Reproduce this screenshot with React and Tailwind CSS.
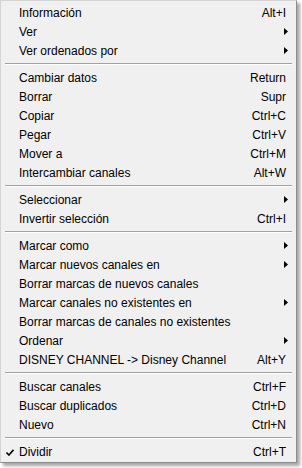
import React from "react";

const groups = [
  [
    { label: "Información", key: "Alt+I" },
    { label: "Ver", sub: true },
    { label: "Ver ordenados por", sub: true },
  ],
  [
    { label: "Cambiar datos", key: "Return" },
    { label: "Borrar", key: "Supr" },
    { label: "Copiar", key: "Ctrl+C" },
    { label: "Pegar", key: "Ctrl+V" },
    { label: "Mover a", key: "Ctrl+M" },
    { label: "Intercambiar canales", key: "Alt+W" },
  ],
  [
    { label: "Seleccionar", sub: true },
    { label: "Invertir selección", key: "Ctrl+I" },
  ],
  [
    { label: "Marcar como", sub: true },
    { label: "Marcar nuevos canales en", sub: true },
    { label: "Borrar marcas de nuevos canales" },
    { label: "Marcar canales no existentes en", sub: true },
    { label: "Borrar marcas de canales no existentes" },
    { label: "Ordenar", sub: true },
    { label: "DISNEY CHANNEL -> Disney Channel", key: "Alt+Y" },
  ],
  [
    { label: "Buscar canales", key: "Ctrl+F" },
    { label: "Buscar duplicados", key: "Ctrl+D" },
    { label: "Nuevo", key: "Ctrl+N" },
  ],
  [{ label: "Dividir", key: "Ctrl+T", checked: true }],
];

const Arrow = () => (
  <svg width="4" height="7" viewBox="0 0 4 7" className="mr-[-2px]">
    <path d="M0 0 L4 3.5 L0 7 Z" fill="#000" />
  </svg>
);

const Check = () => (
  <svg width="8" height="7" viewBox="0 0 8 7" className="absolute left-[5px] top-[7px]">
    <path d="M0.5 3.5 L3 6 L7.5 0.8" stroke="#000" strokeWidth="1.6" fill="none" />
  </svg>
);

const Item = ({ item }) => (
  <div className="relative flex h-[19px] items-center justify-between pl-[18px] pr-[10px]">
    {item.checked && <Check />}
    <span>{item.label}</span>
    {item.key && <span>{item.key}</span>}
    {item.sub && <Arrow />}
  </div>
);

export default function App() {
  return (
    <div className="h-[468px] w-[302px] bg-white">
      <div
        className="w-[297px] border border-t-[#d4d4d4] border-l-[#d4d4d4] border-r-[#8c8c8c] border-b-[#8c8c8c] bg-[#f0f0f0] pt-[2px] pb-[1px] text-[12px] text-black shadow-[3px_3px_3px_rgba(0,0,0,0.35)]"
        style={{ fontFamily: '"Liberation Sans", Arial, sans-serif' }}
      >
        {groups.map((g, i) => (
          <div key={i}>
            {i > 0 && (
              <div className="flex h-[8px] items-center px-[4px]">
                <div className="h-[2px] w-full border-t border-t-[#a0a0a0] border-b border-b-white" />
              </div>
            )}
            {g.map((item) => (
              <Item key={item.label} item={item} />
            ))}
          </div>
        ))}
      </div>
    </div>
  );
}
